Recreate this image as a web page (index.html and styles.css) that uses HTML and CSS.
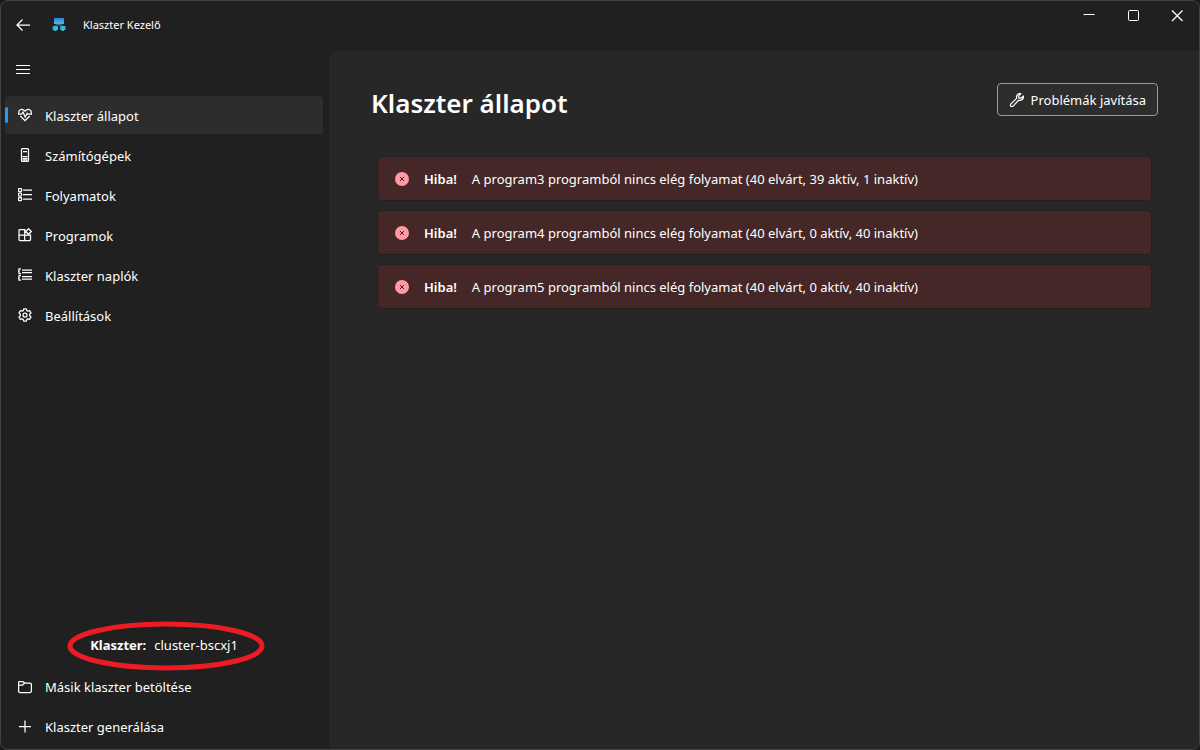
FILE: index.html
```html
<!DOCTYPE html>
<html lang="hu">
<head>
<meta charset="utf-8">
<meta name="viewport" content="width=device-width, initial-scale=1">
<title>Klaszter Kezelő</title>
<link rel="stylesheet" href="styles.css">
</head>
<body>
<div class="window">
  <header class="titlebar">
    <button class="back" type="button" aria-label="Vissza">
      <svg class="icon bold" width="14" height="14" viewBox="0 0 14 14"><path d="M6.500 1.500L1 7l5.500 5.500M1 7h13"/></svg>
    </button>
    <svg class="logo" width="14" height="14" viewBox="0 0 14 14" aria-hidden="true">
      <defs>
        <linearGradient id="screen" x1="0" y1="0" x2="0" y2="1"><stop offset="0" stop-color="#2b86cf"/><stop offset="1" stop-color="#52b8ea"/></linearGradient>
        <linearGradient id="node" x1="0" y1="0" x2="1" y2="1"><stop offset="0" stop-color="#1a9fd0"/><stop offset="1" stop-color="#35d9ee"/></linearGradient>
      </defs>
      <rect x="2" y="0" width="10" height="6" rx="0.500" fill="url(#screen)"/>
      <path d="M4.500 6.500h5M3 8l1-1h6l1 1" fill="none" stroke="#436b80"/>
      <rect x="0.500" y="8" width="5.500" height="4" rx="1" fill="url(#node)"/>
      <rect x="8" y="8" width="5.500" height="4" rx="1" fill="url(#node)"/>
      <path d="M2 12.500h2.500M9.500 12.500H12" stroke="#4f9fb5"/>
    </svg>
    <span class="app-name">Klaszter Kezelő</span>
    <div class="window-controls">
      <button type="button" aria-label="Kis méret"><svg class="icon" width="12" height="12" viewBox="0 0 12 12"><path d="M0.500 4.500h11"/></svg></button>
      <button type="button" aria-label="Teljes méret"><svg class="icon" width="12" height="12" viewBox="0 0 12 12"><rect x="1.500" y="0.500" width="10" height="10" rx="1"/></svg></button>
      <button type="button" aria-label="Bezárás"><svg class="icon bold" width="12" height="12" viewBox="0 0 12 12"><path d="M1 0.500l10.500 10.500M11.500 0.500L1 11"/></svg></button>
    </div>
  </header>
  <div class="body">
    <aside class="sidebar">
      <button class="menu-toggle" type="button" aria-label="Menü">
        <svg class="icon" width="14" height="10" viewBox="0 0 14 10"><path d="M0 0.500h14M0 4.500h14M0 8.500h14"/></svg>
      </button>
      <nav class="nav">
        <a class="item active" href="#allapot">
          <svg class="icon bold" width="14" height="14" viewBox="0 0 14 14"><path d="M1.100 6.100C0 3.600 1.500 1.300 3.800 1.300 5.400 1.300 6.200 2.200 7 3.200c.8-1 1.600-1.900 3.200-1.900 2.300 0 3.800 2.300 2.700 4.800M2.300 8L7 12.700 11.700 8M0 6.200h3.600L5 4l2.200 5 2-3.600.7.800H14"/></svg>
          <span>Klaszter állapot</span></a>
        <a class="item" href="#szamitogepek">
          <svg class="icon bold" width="14" height="14" viewBox="0 0 14 14"><rect x="3.500" y="0.500" width="7" height="13" rx="1.300"/><path d="M5 3.500h4M4.500 8.500h5M4.500 10.500h5M4.500 12h5"/></svg>
          <span>Számítógépek</span></a>
        <a class="item" href="#folyamatok">
          <svg class="icon bold" width="14" height="14" viewBox="0 0 14 14"><rect x="0.500" y="0.500" width="3" height="3" rx="0.500"/><rect x="0.500" y="5" width="3" height="3" rx="0.500"/><rect x="0.500" y="9.500" width="3" height="3" rx="0.500"/><path d="M5 2h9M5 6.500h9M5 11h9"/></svg>
          <span>Folyamatok</span></a>
        <a class="item" href="#programok">
          <svg class="icon bold" width="14" height="14" viewBox="0 0 14 14"><path d="M7.500 1.500h-5.500a1 1 0 0 0-1 1v9a1 1 0 0 0 1 1h9.500a1 1 0 0 0 1-1v-4.500H1M6.700 1.500v11M10.500 0.700l2.800 2.800-2.800 2.800-2.800-2.800z"/></svg>
          <span>Programok</span></a>
        <a class="item" href="#naplok">
          <svg class="icon bold" width="14" height="14" viewBox="0 0 14 14"><path d="M3 .8H1v4.700h2M3 7.500H1V12h2M0 3h1M0 10h1M4 2h10M4 4.500h10M4 8.500h10M4 11h10"/></svg>
          <span>Klaszter naplók</span></a>
        <a class="item" href="#beallitasok">
          <svg class="icon bold" width="14" height="14" viewBox="0 0 14 14"><path d="M5.700 0.900h2.600l.5 1.700 1.100.6 1.800-.5L13 4.900 11.700 6.300v1.400L13 9.100l-1.300 2.200-1.800-.5-1.100.6-.5 1.700H5.700l-.5-1.700-1.100-.6-1.800.5L1 9.100l1.300-1.400V6.300L1 4.900l1.300-2.200 1.800.5 1.100-.6z" stroke-linejoin="round"/><circle cx="7" cy="7" r="2"/></svg>
          <span>Beállítások</span></a>
      </nav>
      <div class="sidebar-footer">
        <p class="cluster"><b>Klaszter:</b><span>cluster-bscxj1</span>
          <svg class="ring" viewBox="0 0 198 50" aria-hidden="true"><ellipse cx="99" cy="25" rx="96" ry="22"/></svg>
        </p>
        <button class="item" type="button">
          <svg class="icon bold" width="14" height="14" viewBox="0 0 14 14"><path d="M0.600 11V2.500a1 1 0 0 1 1-1h3.300l2 1.500h5a1.500 1.500 0 0 1 1.500 1.500V11a1.500 1.500 0 0 1-1.500 1.500H2A1.500 1.500 0 0 1 .6 11zM0.600 5h4l2-2"/></svg>
          Másik klaszter betöltése</button>
        <button class="item" type="button">
          <svg class="icon bold" width="14" height="14" viewBox="0 0 14 14"><path d="M7 0.500v12M1 6.500h12"/></svg>
          Klaszter generálása</button>
      </div>
    </aside>
    <main class="content">
      <div class="heading">
        <h1>Klaszter állapot</h1>
        <button class="fix" type="button">
          <svg class="icon bold" width="14" height="14" viewBox="0 0 14 14"><path d="M10.800.7C8.800 0 6.400 1.600 6.500 4.200L6.700 5.400.9 10.900C0 12 .4 12.900 1 13.300c.8.600 1.600.4 2.100-.2l5.500-5.800c2.700.8 5.500-1.400 4.700-4.300l-2.300 2.200-2.100-.1-.2-2.200z" stroke-linejoin="round"/></svg>
          Problémák javítása</button>
      </div>
      <ul class="alerts">
        <li class="alert"><svg class="error" width="14" height="14" viewBox="0 0 14 14"><circle cx="7" cy="7" r="7"/><path d="M5 5l4 4M9 5l-4 4"/></svg><strong>Hiba!</strong><span>A program3 programból nincs elég folyamat (40 elvárt, 39 aktív, 1 inaktív)</span></li>
        <li class="alert"><svg class="error" width="14" height="14" viewBox="0 0 14 14"><circle cx="7" cy="7" r="7"/><path d="M5 5l4 4M9 5l-4 4"/></svg><strong>Hiba!</strong><span>A program4 programból nincs elég folyamat (40 elvárt, 0 aktív, 40 inaktív)</span></li>
        <li class="alert"><svg class="error" width="14" height="14" viewBox="0 0 14 14"><circle cx="7" cy="7" r="7"/><path d="M5 5l4 4M9 5l-4 4"/></svg><strong>Hiba!</strong><span>A program5 programból nincs elég folyamat (40 elvárt, 0 aktív, 40 inaktív)</span></li>
      </ul>
    </main>
  </div>
</div>
</body>
</html>
```
FILE: styles.css
```css
* { box-sizing: border-box; }

body {
  margin: 0;
  background: #1b1b1b;
  color: #fff;
  font: 13px/20px "Segoe UI", "Noto Sans", "Open Sans", sans-serif;
}

button {
  border: 0;
  padding: 0;
  background: none;
  color: inherit;
  font: inherit;
}

svg { flex: none; }

.icon {
  fill: none;
  stroke: #fff;
  stroke-width: 1;
}

.icon.bold { stroke-width: 1.25; }

.window {
  display: flex;
  flex-direction: column;
  min-height: 100vh;
  overflow: hidden;
  border: 1px solid #434343;
  border-radius: 8px;
  background: #202020;
}

.titlebar {
  display: flex;
  align-items: center;
  height: 50px;
  padding: 0 0 2px 15px;
}

.back {
  display: flex;
  margin-right: 22px;
}

.logo { margin-right: 17px; }

.app-name { font-size: 11px; }

.window-controls {
  display: flex;
  align-self: flex-start;
  margin-left: auto;
}

.window-controls button {
  display: flex;
  align-items: center;
  justify-content: center;
  width: 44px;
  height: 30px;
}

.body {
  display: flex;
  flex: 1;
}

.sidebar {
  display: flex;
  flex: none;
  flex-direction: column;
  width: 328px;
  padding: 0 6px 3px 4px;
}

.menu-toggle {
  display: flex;
  align-items: center;
  height: 37px;
  padding-left: 11px;
}

.nav {
  display: flex;
  flex-direction: column;
  gap: 2px;
  margin-top: 8px;
}

.item {
  display: flex;
  align-items: center;
  gap: 13px;
  width: 100%;
  height: 38px;
  padding: 0 13px;
  border-radius: 4px;
  color: inherit;
  text-align: left;
  text-decoration: none;
}

.nav span { padding-top: 2px; }

.active {
  position: relative;
  background: #2d2d2d;
}

.active::before {
  content: "";
  position: absolute;
  top: 11px;
  left: 0;
  width: 3px;
  height: 16px;
  border-radius: 2px;
  background: #2899f5;
}

.sidebar-footer {
  display: flex;
  flex-direction: column;
  gap: 2px;
  margin-top: auto;
}

.cluster {
  position: relative;
  display: flex;
  align-items: center;
  justify-content: center;
  gap: 8px;
  height: 42px;
  margin: 0;
}

.ring {
  position: absolute;
  top: -3px;
  left: 62px;
  width: 198px;
  height: 50px;
  fill: none;
  stroke: #ed1c24;
  stroke-width: 5;
}

.content {
  flex: 1;
  padding: 32px 41px 32px 42px;
  border-top-left-radius: 8px;
  background: #272727;
}

.heading {
  display: flex;
  align-items: flex-start;
  justify-content: space-between;
}

h1 {
  margin: 0;
  font-size: 26px;
  font-weight: 600;
  line-height: 40px;
}

.fix {
  display: flex;
  align-items: center;
  gap: 7px;
  height: 33px;
  padding: 0 11px 0 12px;
  border: 1px solid #9a9a9a;
  border-radius: 4px;
  background: #2d2d2d;
}

.alerts {
  display: flex;
  flex-direction: column;
  gap: 11px;
  margin: 34px 7px 0;
  padding: 0;
  list-style: none;
}

.alert {
  display: flex;
  align-items: center;
  min-height: 43px;
  padding: 0 17px;
  border-radius: 4px;
  background: #442726;
  box-shadow: 0 0 0 1px #242020;
}

.alert strong {
  margin: 0 15px;
  font-weight: 600;
}

.error { fill: #ff99a4; }

.error path { stroke: #442726; }
```
